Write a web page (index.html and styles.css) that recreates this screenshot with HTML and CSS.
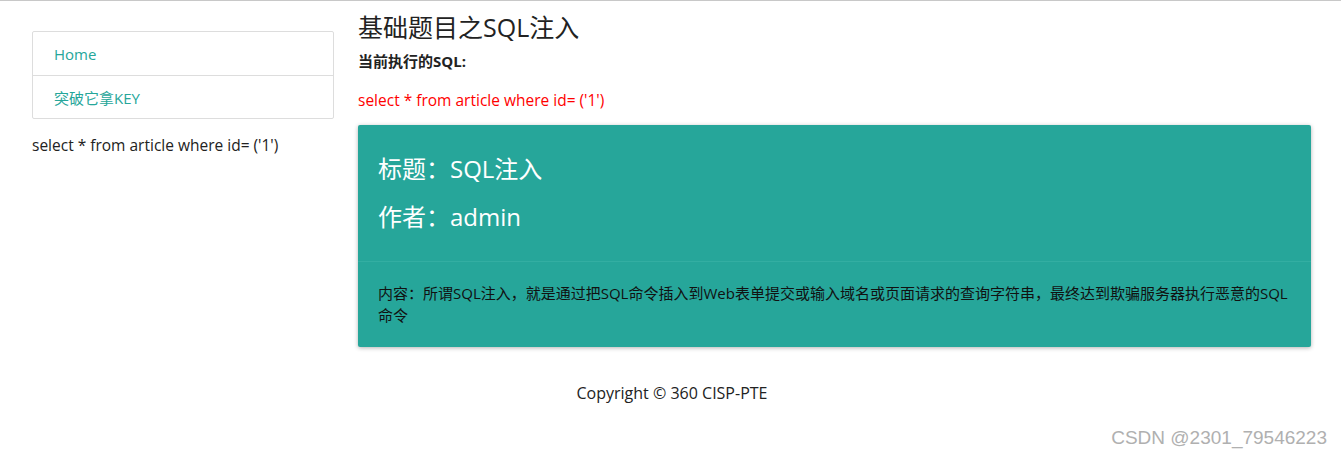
FILE: index.html
```html
<!DOCTYPE html>
<html lang="zh-CN">
<head>
<meta charset="utf-8">
<title>基础题目之SQL注入</title>
<link rel="stylesheet" href="styles.css">
</head>
<body>
<div class="topline"></div>
<div class="container">
  <aside class="side">
    <ul class="list-group">
      <li class="list-item"><a href="#">Home</a></li>
      <li class="list-item"><a href="#">突破它拿KEY</a></li>
    </ul>
    <p class="side-sql">select * from article where id= ('1')</p>
  </aside>
  <main class="main">
    <h1 class="title">基础题目之SQL注入</h1>
    <p class="label">当前执行的SQL:</p>
    <p class="sql">select * from article where id= ('1')</p>
    <div class="panel">
      <div class="panel-head">
        <h3 class="ph-line">标题：SQL注入</h3>
        <h3 class="ph-line">作者：admin</h3>
      </div>
      <div class="panel-body">
        内容：所谓SQL注入，就是通过把SQL命令插入到Web表单提交或输入域名或页面请求的查询字符串，最终达到欺骗服务器执行恶意的SQL命令
      </div>
    </div>
  </main>
</div>
<footer class="footer">Copyright © 360 CISP-PTE</footer>
<div class="watermark">CSDN @2301_79546223</div>
</body>
</html>
```
FILE: styles.css
```css
* { box-sizing: border-box; }
html, body { margin: 0; padding: 0; }
body {
  font-family: "Open Sans", "Noto Sans CJK SC", sans-serif;
  font-size: 14px;
  color: #222;
  background: #fff;
  width: 1341px;
  height: 457px;
  position: relative;
  overflow: hidden;
}
.topline { height: 1px; background: #c8c8c8; }
.container {
  display: flex;
  gap: 24px;
  padding-left: 32px;
  padding-right: 30px;
}
.side { width: 302px; flex: none; padding-top: 30px; }
.list-group {
  list-style: none;
  margin: 0;
  padding: 0;
  border: 1px solid #ddd;
  border-radius: 2px;
}
.list-item {
  height: 43px;
  display: flex;
  align-items: center;
  padding-left: 21px;
  font-size: 15px;
}
.list-item + .list-item { border-top: 1px solid #ddd; height: 43px; }
.list-item a { color: #26a69a; text-decoration: none; }
.side-sql { margin: 15px 0 0; font-size: 15.5px; color: #222; line-height: 22px; }
.main { flex: 1; }
.title {
  margin: 11px 0 0;
  font-weight: 400;
  font-size: 25px;
  line-height: 30px;
  color: #222;
}
.label {
  margin: 9px 0 0;
  font-weight: 700;
  font-size: 15px;
  line-height: 20px;
}
.sql {
  margin: 18px 0 0;
  color: #ff0000;
  font-size: 15.5px;
  line-height: 22px;
}
.panel {
  margin-top: 14px;
  background: #26a69a;
  border-radius: 2px;
  box-shadow: 0 1px 4px rgba(0,0,0,0.3);
}
.panel-head {
  padding: 20px 20px 20px;
  border-bottom: 1px solid #33aea2;
}
.ph-line {
  margin: 0;
  font-weight: 400;
  font-size: 24px;
  line-height: 48px;
  color: #fff;
}
.panel-body {
  padding: 20px 20px 21px;
  font-size: 15px;
  line-height: 22px;
  color: #111;
}
.footer {
  text-align: center;
  margin-top: 35px;
  font-size: 16px;
  color: #222;
  padding-left: 3px;
}
.watermark {
  position: absolute;
  right: 14px;
  bottom: 8px;
  font-family: "Liberation Sans", Arial, sans-serif;
  font-size: 19px;
  color: #b0b0b0;
}
```
